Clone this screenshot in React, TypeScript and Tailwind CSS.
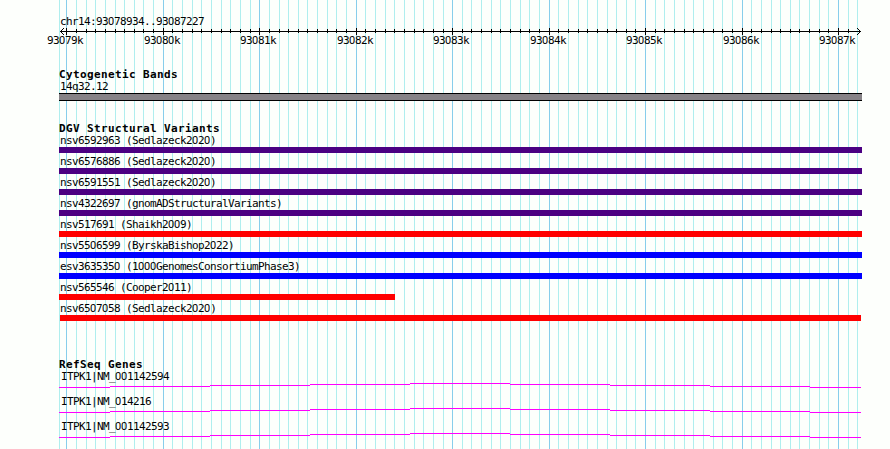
import type { ReactNode } from "react";

const TICK = 9.6467;
const ticks = Array.from({ length: 83 }, (_, i) => ({
  x: Math.floor(66.8 + i * TICK),
  major: i % 10 === 0,
}));
const kilobases = ["93079k", "93080k", "93081k", "93082k", "93083k", "93084k", "93085k", "93086k", "93087k"];

const variants = [
  { name: "nsv6592963 (Sedlazeck2020)", bar: "ml-[59px] w-[803px] bg-[#4b0082]" },
  { name: "nsv6576886 (Sedlazeck2020)", bar: "ml-[59px] w-[803px] bg-[#4b0082]" },
  { name: "nsv6591551 (Sedlazeck2020)", bar: "ml-[59px] w-[803px] bg-[#4b0082]" },
  { name: "nsv4322697 (gnomADStructuralVariants)", bar: "ml-[59px] w-[803px] bg-[#4b0082]" },
  { name: "nsv517691 (Shaikh2009)", bar: "ml-[59px] w-[803px] bg-[#ff0000]" },
  { name: "nsv5506599 (ByrskaBishop2022)", bar: "ml-[59px] w-[803px] bg-[#0000ff]" },
  { name: "esv3635350 (1000GenomesConsortiumPhase3)", bar: "ml-[59px] w-[803px] bg-[#0000ff]" },
  { name: "nsv565546 (Cooper2011)", bar: "ml-[59px] w-[336px] bg-[#ff0000]" },
  { name: "nsv6507058 (Sedlazeck2020)", bar: "ml-[60px] w-[801px] bg-[#ff0000]" },
];

const genes = ["ITPK1|NM_001142594", "ITPK1|NM_014216", "ITPK1|NM_001142593"];

// Zeros use a face without the inner dot, spaced to the same 6px cell.
function Label({ children }: { children: string }) {
  return (
    <span className="block whitespace-pre text-[11px] leading-[14px] tracking-[-0.622px]">
      {children.split(/(0+)/).map((part, i) =>
        part.startsWith("0") ? (
          <span key={i} className="font-[Roboto,sans-serif] leading-none tracking-[-0.178px]">{part}</span>
        ) : (
          part
        ),
      )}
    </span>
  );
}

function Heading({ children }: { children: ReactNode }) {
  return (
    <h2 className="ml-[59px] h-[11px] whitespace-pre text-[11px] font-bold leading-[12px] tracking-[0.378px]">
      {children}
    </h2>
  );
}

function Grid() {
  return (
    <svg className="absolute inset-0" width="890" height="449" shapeRendering="crispEdges" aria-hidden="true">
      <rect x="59" y="0" width="1" height="449" fill="#afeeee" />
      {ticks.map((t) => (
        <rect key={t.x} x={t.x} y="0" width="1" height="449" fill={t.major ? "#87ceeb" : "#afeeee"} />
      ))}
    </svg>
  );
}

function Ruler() {
  return (
    <svg className="block" width="890" height="8" shapeRendering="crispEdges" aria-hidden="true">
      <rect x="60" y="3" width="801" height="1" />
      {ticks.slice(0, -1).map((t) => (
        <rect key={t.x} x={t.x} y={t.major ? 0 : 1} width="1" height={t.major ? 7 : 4} />
      ))}
      <path d="M61 2h1v1h-1zM62 1h1v1h-1zM63 0h1v1h-1zM61 4h1v1h-1zM62 5h1v1h-1zM63 6h1v1h-1z" />
      <path d="M859 2h1v1h-1zM858 1h1v1h-1zM857 0h1v1h-1zM859 4h1v1h-1zM858 5h1v1h-1zM857 6h1v1h-1z" />
    </svg>
  );
}

export default function App() {
  return (
    <main className="relative h-[449px] w-[890px] overflow-hidden bg-[#fdfffc] font-['DejaVu_Sans_Mono',monospace] text-black">
      <Grid />
      <div className="relative flex flex-col">
        <header className="h-[69px] pt-[15px]">
          <div className="ml-[60px] h-[13px]"><Label>chr14:93078934..93087227</Label></div>
          <Ruler />
          <div className="-mt-[2px] ml-[47px] flex">
            {kilobases.map((k, i) => (
              <div key={k} className={i % 2 ? "w-[96px] shrink-0" : "w-[97px] shrink-0"}><Label>{k}</Label></div>
            ))}
          </div>
        </header>

        <section className="h-[54px]">
          <Heading>Cytogenetic Bands</Heading>
          <div className="ml-[60px] h-[13px]"><Label>14q32.12</Label></div>
          <div className="ml-[59px] h-[8px] w-[803px] border-y border-black bg-[#868286]" />
        </section>

        <section className="h-[236px]">
          <Heading>DGV Structural Variants</Heading>
          {variants.map((v) => (
            <div key={v.name} className="h-[21px]">
              <div className="ml-[60px] h-[13px]"><Label>{v.name}</Label></div>
              <div className={`h-[6px] ${v.bar}`} />
            </div>
          ))}
        </section>

        <section>
          <Heading>RefSeq Genes</Heading>
          {genes.map((g) => (
            <div key={g} className="h-[25px]">
              <div className="ml-[61px] h-[13px]"><Label>{g}</Label></div>
              <svg className="block" width="890" height="5" shapeRendering="crispEdges" aria-hidden="true">
                <path
                  fill="#ff00ff"
                  d="M59 4h51v1h-51zM110 3h100v1h-100zM210 2h100v1h-100zM310 1h100v1h-100zM410 0h100v1h-100zM510 1h100v1h-100zM610 2h100v1h-100zM710 3h100v1h-100zM810 4h51v1h-51z"
                />
              </svg>
            </div>
          ))}
        </section>
      </div>
    </main>
  );
}
